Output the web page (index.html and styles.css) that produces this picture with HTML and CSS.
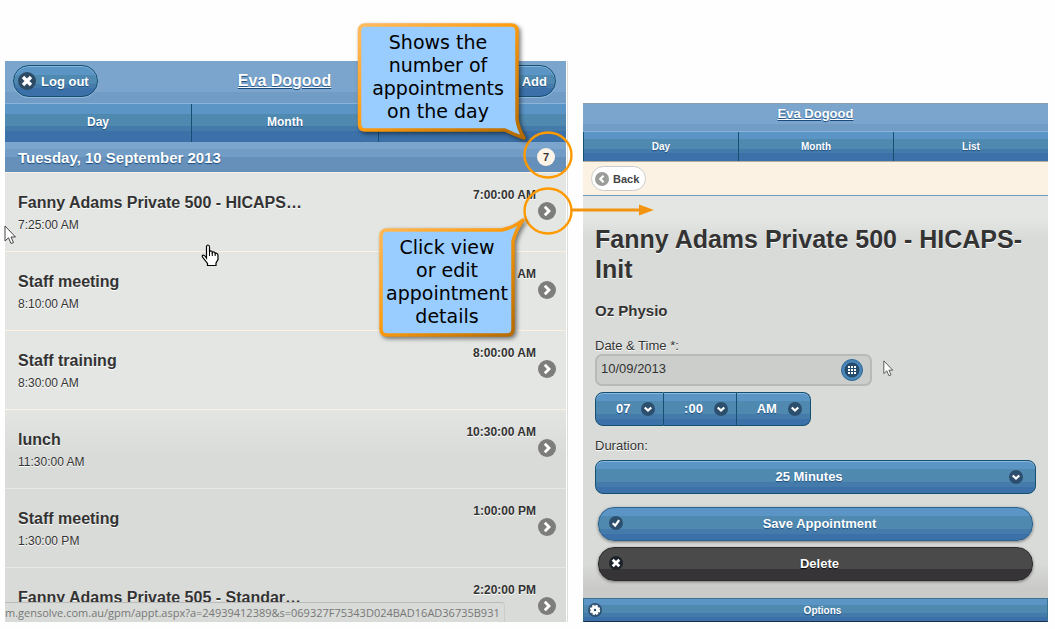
FILE: index.html
```html
<!DOCTYPE html>
<html lang="en">
    <head>
        <meta charset="utf-8">
        <title>Appointments</title>
        <link rel="stylesheet" href="styles.css">
    </head>
    <body>
        <svg class="defs" aria-hidden="true">
            <defs>
                <linearGradient id="edge" x1="0" y1="0" x2="1" y2="1">
                    <stop offset="0" stop-color="#ffbb60"/>
                    <stop offset="0.45" stop-color="#ff9d10"/>
                    <stop offset="1" stop-color="#b06800"/>
                </linearGradient>
            </defs>
            <symbol id="i-right" viewBox="0 0 18 18"><circle cx="9" cy="9" r="9" fill="#7d7d7c"/><path d="M6.8 4.8 L11 9 L6.8 13.2" fill="none" stroke="#fff" stroke-width="2.8"/></symbol>
            <symbol id="i-left" viewBox="0 0 18 18"><circle cx="9" cy="9" r="9" fill="#9a9d9a"/><path d="M11 4.8 L6.8 9 L11 13.2" fill="none" stroke="#fff" stroke-width="2.8"/></symbol>
            <symbol id="i-down" viewBox="0 0 18 18"><circle cx="9" cy="9" r="9" fill="#2c4f6e"/><path d="M4.8 7 L9 11 L13.2 7" fill="none" stroke="#fff" stroke-width="2.8"/></symbol>
            <symbol id="i-x" viewBox="0 0 18 18"><circle cx="9" cy="9" r="9" fill="#2c4a63"/><path d="M5 5 L13 13 M13 5 L5 13" stroke="#fff" stroke-width="3.4"/></symbol>
            <symbol id="i-xdark" viewBox="0 0 18 18"><circle cx="9" cy="9" r="9" fill="#1d232b"/><path d="M4.800 4.800 L13.200 13.200 M13.200 4.800 L4.800 13.200" stroke="#fff" stroke-width="3.6"/></symbol>
            <symbol id="i-plus" viewBox="0 0 18 18"><circle cx="9" cy="9" r="9" fill="#2c4a63"/><path d="M9 4 V14 M4 9 H14" stroke="#fff" stroke-width="3"/></symbol>
            <symbol id="i-check" viewBox="0 0 18 18"><circle cx="9" cy="9" r="9" fill="#2c4f6e"/><path d="M4.8 9.2 L8 12.4 L13 5.2" fill="none" stroke="#fff" stroke-width="2.8"/></symbol>
            <symbol id="i-gear" viewBox="0 0 18 18"><circle cx="9" cy="9" r="9" fill="#2c4f6e"/><circle cx="9" cy="9" r="5.4" fill="none" stroke="#fff" stroke-width="2.6" stroke-dasharray="2.9 1.34"/><circle cx="9" cy="9" r="3.4" fill="none" stroke="#fff" stroke-width="3.6"/></symbol>
            <symbol id="i-grid" viewBox="0 0 22 22"><circle cx="11" cy="11" r="10.5" fill="#4a86b8" stroke="#2a6796"/><circle cx="11" cy="11" r="7.5" fill="#244a6c"/><path d="M7 8 H15 M7 11 H15 M7 14 H15" stroke="#fff" stroke-width="2" stroke-dasharray="2 1"/></symbol>
            <symbol id="i-arrow" viewBox="0 0 13 20"><path d="M1 1 V16 L4.500 12.800 L7 18.500 L9.500 17.500 L7 12 H11.500 Z" fill="#fff" stroke="#444" stroke-width="1"/></symbol>
        </svg>

        <main class="screens">
            <section class="phone day-list">
                <header class="bar">
                    <button class="pill"><svg><use href="#i-x"/></svg>Log out</button>
                    <a class="user" href="#">Eva Dogood</a>
                    <button class="pill add"><svg><use href="#i-plus"/></svg>Add</button>
                </header>
                <nav class="tabs">
                    <a href="#">Day</a>
                    <a href="#">Month</a>
                    <a href="#" aria-label="List"></a>
                </nav>
                <h2 class="date">Tuesday, 10 September 2013 <span class="count">7</span></h2>
                <ul class="list">
                    <li><a href="#"><h3>Fanny Adams Private 500 - HICAPS…</h3><p>7:25:00 AM</p><time>7:00:00 AM</time><svg class="go"><use href="#i-right"/></svg></a></li>
                    <li><a href="#"><h3>Staff meeting</h3><p>8:10:00 AM</p><time>AM</time><svg class="go"><use href="#i-right"/></svg></a></li>
                    <li><a href="#"><h3>Staff training</h3><p>8:30:00 AM</p><time>8:00:00 AM</time><svg class="go"><use href="#i-right"/></svg></a></li>
                    <li><a href="#"><h3>lunch</h3><p>11:30:00 AM</p><time>10:30:00 AM</time><svg class="go"><use href="#i-right"/></svg></a></li>
                    <li><a href="#"><h3>Staff meeting</h3><p>1:30:00 PM</p><time>1:00:00 PM</time><svg class="go"><use href="#i-right"/></svg></a></li>
                    <li><a href="#"><h3>Fanny Adams Private 505 - Standar…</h3><time>2:20:00 PM</time><svg class="go"><use href="#i-right"/></svg></a></li>
                </ul>
                <div class="status">m.gensolve.com.au/gpm/appt.aspx?a=24939412389&amp;s=069327F75343D024BAD16AD36735B931</div>

                <!-- notes drawn over the list -->
                <svg class="cursor cursor-list"><use href="#i-arrow"/></svg>
                <svg class="hand" viewBox="0 0 18 23">
                    <path d="M5.500 14 V3 Q5.500 1 7 1 Q8.500 1 8.500 3 V8 Q9 6.500 10.300 7 Q11.300 7.400 11.300 8.500 Q12 7.500 13.200 8 Q14.200 8.500 14.200 9.500 Q15 8.800 16 9.500 Q17 10 17 12 V15.500 L15 19 V21.500 H6.500 V19.500 L1.500 13 Q0.800 11.500 2.200 11 Q3.500 11 5.500 14 Z" fill="#fff" stroke="#000" stroke-width="1.2"/>
                    <path d="M8.500 8 V12 M11.300 8.500 V12 M14.200 9.500 V12" stroke="#000"/>
                </svg>
                <svg class="ring ring-count" viewBox="0 0 50 48"><ellipse cx="25" cy="24" rx="23.500" ry="22.500" fill="none" stroke="#f90" stroke-width="2.400"/></svg>
                <svg class="ring ring-go" viewBox="0 0 50 48"><ellipse cx="25" cy="24" rx="23.500" ry="22.500" fill="none" stroke="#f90" stroke-width="2.400"/></svg>
                <svg class="pointer" viewBox="0 0 84 12"><path d="M0 6 H72" stroke="#f29410" stroke-width="3"/><path d="M68 0.500 L83 6 L68 11.500 Z" fill="#f29410"/></svg>
                <div class="note note-count">
                    <svg viewBox="0 0 178 126"><path d="M9 4 H155 Q161 4 161 10 V98 Q162 107 168 117 Q159 114 149 109 H9 Q3.500 109 3.500 103 V10 Q3.500 4 9 4 Z" fill="#9cf" stroke="url(#edge)" stroke-width="3.500" stroke-linejoin="round"/></svg>
                    <p>Shows the<br>number of<br>appointments<br>on the day</p>
                </div>
                <div class="note note-go">
                    <svg viewBox="0 0 156 126"><path d="M10 14 H125 Q136 12 146 4 Q139 14 136 25 V113 Q136 119 130 119 H10 Q4 119 4 113 V20 Q4 14 10 14 Z" fill="#9cf" stroke="url(#edge)" stroke-width="3.500" stroke-linejoin="round"/></svg>
                    <p>Click view<br>or edit<br>appointment<br>details</p>
                </div>
            </section>

            <section class="phone detail">
                <header class="bar"><a class="user" href="#">Eva Dogood</a></header>
                <nav class="tabs">
                    <a href="#">Day</a>
                    <a href="#">Month</a>
                    <a href="#">List</a>
                </nav>
                <div class="backbar"><button class="back"><svg><use href="#i-left"/></svg>Back</button></div>
                <form class="content">
                    <h1>Fanny Adams Private 500 - HICAPS-Init</h1>
                    <h2>Oz Physio</h2>
                    <label for="date">Date &amp; Time *:</label>
                    <div class="datebox">
                        <input type="text" id="date" value="10/09/2013">
                        <button type="button" aria-label="Pick a date"><svg><use href="#i-grid"/></svg></button>
                    </div>
                    <div class="times">
                        <span class="drop"><select aria-label="Hour"><option>07</option></select><svg><use href="#i-down"/></svg></span>
                        <span class="drop"><select aria-label="Minute"><option>:00</option></select><svg><use href="#i-down"/></svg></span>
                        <span class="drop"><select aria-label="AM or PM"><option>AM</option></select><svg><use href="#i-down"/></svg></span>
                    </div>
                    <label for="duration">Duration:</label>
                    <span class="drop wide"><select id="duration"><option>25 Minutes</option></select><svg><use href="#i-down"/></svg></span>
                    <button type="button" class="action save"><svg><use href="#i-check"/></svg>Save Appointment</button>
                    <button type="button" class="action delete"><svg><use href="#i-xdark"/></svg>Delete</button>
                </form>
                <button class="options"><svg><use href="#i-gear"/></svg>Options</button>
                <svg class="cursor cursor-form"><use href="#i-arrow"/></svg>
            </section>
        </main>
    </body>
</html>
```
FILE: styles.css
```css
* {
    box-sizing: border-box;
}
body {
    margin: 0;
    background: #fefefe;
    color: #333;
    font-family: "Liberation Sans", Arial, sans-serif;
}
h1, h2, h3, p, ul {
    margin: 0;
    padding: 0;
}
a {
    color: inherit;
    text-decoration: none;
}
button, select, input {
    font-family: inherit;
    margin: 0;
}
svg {
    display: block;
}
.defs {
    position: absolute;
    width: 0;
    height: 0;
}

.screens {
    display: grid;
    grid-template-columns: 561fr 465fr;
    gap: 17px;
    height: 100vh;
    min-height: 629px;
    padding: 61px 7px 7px 5px;
}
.phone {
    position: relative;
    display: flex;
    flex-direction: column;
    min-width: 0;
    min-height: 0;
}
.day-list {
    background: linear-gradient(#e4e6e3 345px, #d9dbd8 395px);
    box-shadow: 1px 0 #fff, 2px 0 #ddd;
}

/* blue bars */
.bar {
    display: flex;
    align-items: center;
    justify-content: space-between;
    height: 42px;
    padding: 0 10px 2px 8px;
    background: linear-gradient(#7ca5cd 75%, #719cc5 75%);
    color: #fff;
    text-shadow: 0 1px 1px #194b7e;
}
.day-list .bar {
    display: grid;
    grid-template-columns: 1fr auto 1fr;
}
.user {
    font-size: 16px;
    font-weight: bold;
    text-decoration: underline;
}
.pill {
    display: flex;
    align-items: center;
    justify-self: start;
    gap: 5px;
    height: 32px;
    padding: 0 8px 0 4px;
    border: 1px solid #145072;
    border-radius: 16px;
    background: linear-gradient(#5b95c6 30%, #5089b0 30% 60%, #457bab 60% 75%, #3b70a8 75%);
    box-shadow: inset 0 1px #8ab8dc, 0 1px #93b8da;
    color: #fff;
    font-size: 13px;
    font-weight: bold;
    text-shadow: 0 1px 1px #194b7e;
}
.pill svg {
    width: 18px;
    height: 18px;
}
.add {
    justify-self: end;
}
.tabs {
    display: grid;
    grid-template-columns: repeat(3, 1fr);
    height: 39px;
    border-top: 1px solid #8ab4da;
    background: linear-gradient(#5b95c6 25%, #5089b0 25% 58%, #457bab 58% 72%, #3b70a8 72%);
    color: #fff;
    font-size: 12px;
    font-weight: bold;
    text-shadow: 0 1px 1px #194b7e;
}
.tabs a {
    display: flex;
    align-items: center;
    justify-content: center;
    border-left: 1px solid #145072;
}
.day-list .tabs a {
    border-left: 0;
    border-right: 1px solid #145072;
    padding-bottom: 2px;
}
.day-list .tabs a:last-child {
    border-right: 0;
}
.date {
    display: flex;
    align-items: center;
    justify-content: space-between;
    height: 30px;
    padding: 0 11px 0 13px;
    background: linear-gradient(#7ca5cd 25%, #719cc5 25% 50%, #6690b9 50%);
    color: #fff;
    font-size: 15px;
    text-shadow: 0 1px 1px #194b7e;
}
.count {
    width: 18px;
    height: 18px;
    border-radius: 9px;
    background: #fdf4e7;
    color: #333;
    font-size: 11px;
    line-height: 18px;
    text-align: center;
    text-shadow: none;
}

/* appointments */
.list {
    flex: 1;
    min-height: 0;
    overflow: hidden;
    list-style: none;
    text-shadow: 0 1px #fff;
}
.list li {
    border-top: 1px solid #fcf1e2;
}
.list li:nth-child(n+5) {
    border-top-color: #e6e8e5;
}
.list a {
    display: grid;
    grid-template-columns: 1fr auto 18px;
    grid-template-rows: 30px 24px;
    column-gap: 2px;
    height: 78px;
    padding: 14px 10px 0 13px;
}
.list h3 {
    grid-area: 1 / 1;
    align-self: end;
    font-size: 16px;
    line-height: 28px;
    white-space: nowrap;
}
.list p {
    grid-area: 2 / 1;
    font-size: 12px;
    line-height: 16px;
}
.list time {
    grid-area: 1 / 2;
    font-size: 12px;
    font-weight: bold;
    line-height: 16px;
}
.list .go {
    grid-area: 1 / 3 / span 2;
    width: 18px;
    height: 18px;
    margin-top: 15px;
}
.status {
    position: absolute;
    left: 0;
    bottom: 0;
    height: 20px;
    padding-right: 4px;
    border-top: 1px solid #bbb;
    border-right: 1px solid #ccc;
    border-radius: 0 4px 0 0;
    background: #d9dbd8;
    color: #777;
    font-family: "Open Sans", sans-serif;
    font-size: 11px;
    line-height: 19px;
    white-space: nowrap;
}

/* notes and pointers */
.ring {
    position: absolute;
    right: -7px;
    width: 50px;
    height: 48px;
}
.ring-count {
    top: 70px;
}
.ring-go {
    top: 126px;
}
.pointer {
    position: absolute;
    right: -89px;
    top: 143px;
    width: 84px;
    height: 12px;
    z-index: 2;
}
.note {
    position: absolute;
    color: #000;
    font-family: "DejaVu Sans", sans-serif;
    font-size: 19px;
    line-height: 23px;
    text-align: center;
}
.note svg {
    position: absolute;
    inset: 0;
    width: 100%;
    height: 100%;
    filter: drop-shadow(2px 2px 2px rgba(0, 0, 0, 0.5));
}
.note p {
    position: relative;
}
.note-count {
    right: 32px;
    top: -40px;
    width: 178px;
    height: 126px;
    padding: 10px 14px 0 0;
}
.note-go {
    right: 33px;
    top: 155px;
    width: 156px;
    height: 126px;
    padding: 20px 16px 0 0;
}
.cursor {
    position: absolute;
    width: 13px;
    height: 20px;
}
.cursor-list {
    left: -1px;
    top: 164px;
}
.cursor-form {
    left: 300px;
    top: 257px;
    width: 11px;
    height: 17px;
}
.hand {
    position: absolute;
    left: 196px;
    top: 183px;
    width: 18px;
    height: 23px;
}

/* appointment form */
.detail {
    margin-top: 42px;
    background: linear-gradient(#e4e6e3 115px, #d9dbd8 135px 460px, #cacbc8 485px);
}
.detail .bar {
    justify-content: center;
    align-items: flex-start;
    height: 28px;
    padding: 2px 0 0;
    border-top: 1px solid #8a9eb0;
}
.detail .user {
    font-size: 13px;
    line-height: 15px;
}
.detail .tabs {
    height: 30px;
    font-size: 10px;
}
.backbar {
    display: flex;
    align-items: center;
    height: 34px;
    padding: 0 8px;
    border-top: 1px solid #b5aca0;
    background: #fcf2e4;
    box-shadow: 0 1px #6f9bb8;
}
.back {
    display: flex;
    align-items: center;
    gap: 4px;
    height: 25px;
    padding: 0 6px 0 3px;
    border: 1px solid #ccc;
    border-radius: 13px;
    background: #fff;
    color: #444;
    font-size: 11px;
    font-weight: bold;
}
.back svg {
    width: 14px;
    height: 14px;
}
.content {
    display: flex;
    flex: 1;
    flex-direction: column;
    padding: 29px 12px 0;
    text-shadow: 0 1px #fff;
}
.content h1 {
    font-size: 25px;
    line-height: 30px;
}
.content h2 {
    margin: 18px 0;
    font-size: 15px;
    line-height: 18px;
}
.content label {
    font-size: 13px;
    line-height: 16px;
}
.datebox {
    display: flex;
    align-items: center;
    width: 277px;
    height: 32px;
    padding: 0 7px 0 4px;
    border: 2px solid #b6bab8;
    border-radius: 7px;
    background: #cccecb;
}
.datebox input {
    flex: 1;
    min-width: 0;
    padding: 0 0 3px;
    border: 0;
    background: none;
    color: #333;
    font-size: 13px;
    line-height: 24px;
}
.datebox button {
    padding: 0;
    border: 0;
    background: none;
}
.datebox button svg {
    width: 22px;
    height: 22px;
}
.times {
    display: flex;
    width: 216px;
    margin: 6px 0 12px;
}
.drop {
    position: relative;
    flex: 1 1 auto;
}
.drop select {
    display: block;
    width: 100%;
    height: 34px;
    padding: 0 31px 2px 18px;
    appearance: none;
    border: 1px solid #145072;
    border-radius: 0;
    background: linear-gradient(#5b95c6 25%, #5089b0 25% 65%, #457bab 65% 80%, #3b70a8 80%);
    box-shadow: inset 0 1px #8ab8dc;
    color: #fff;
    font-size: 13px;
    font-weight: bold;
    text-align-last: center;
    text-shadow: 0 1px 1px #194b7e;
}
.times .drop + .drop select {
    border-left: 0;
}
.times .drop:first-child select {
    border-radius: 8px 0 0 8px;
}
.times .drop:last-child select {
    border-radius: 0 8px 8px 0;
}
.drop svg {
    position: absolute;
    right: 9px;
    top: 10px;
    width: 14px;
    height: 14px;
    pointer-events: none;
}
.wide {
    flex: none;
    margin-top: 6px;
}
.wide select {
    border-radius: 8px;
}
.wide svg {
    right: 13px;
}
.action {
    display: grid;
    grid-template-columns: 14px 1fr 6px;
    align-items: center;
    height: 34px;
    margin: 13px 3px 0;
    padding: 0 10px 2px;
    border: 1px solid #2a6290;
    border-radius: 16px;
    background: linear-gradient(#5b95c6 25%, #5089b0 25% 65%, #457bab 65% 82%, #3b70a8 82%);
    box-shadow: 0 1px 3px #777;
    color: #fff;
    font-size: 13px;
    font-weight: bold;
    text-shadow: 0 1px 1px #194b7e;
}
.action svg {
    width: 14px;
    height: 14px;
}
.delete {
    margin-top: 6px;
    border-color: #2b2b2d;
    background: linear-gradient(#4a4a4a 65%, #363437 65%);
    text-shadow: 0 1px 1px #000;
}
.options {
    display: grid;
    grid-template-columns: 14px 1fr;
    align-items: center;
    height: 24px;
    padding: 0 4px;
    border: 1px solid #3a7391;
    border-bottom: 1px solid #162f4a;
    background: linear-gradient(#5b95c6 25%, #5089b0 25% 65%, #457bab 65% 82%, #3b70a8 82%);
    color: #fff;
    font-size: 10px;
    font-weight: bold;
    text-shadow: 0 1px 1px #194b7e;
}
.options svg {
    width: 14px;
    height: 14px;
}
```
